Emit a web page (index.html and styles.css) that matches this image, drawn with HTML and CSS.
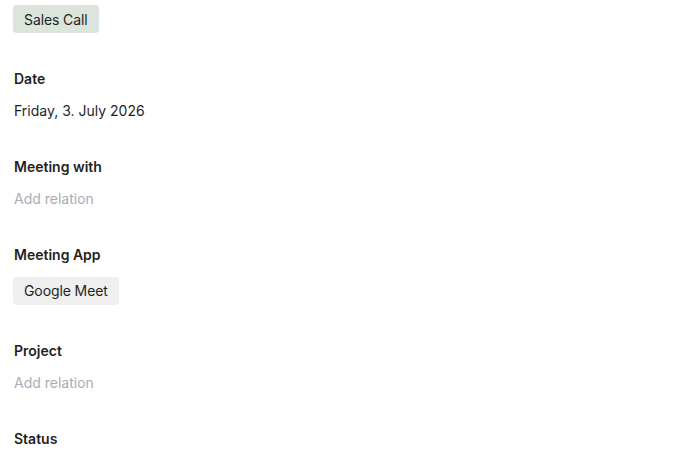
FILE: index.html
```html
<!DOCTYPE html>
<html lang="en">
<head>
<meta charset="utf-8">
<title>Sales Call</title>
<link rel="stylesheet" href="styles.css">
</head>
<body>
<div class="page">
  <div class="head">
    <span class="tag tag-green">Sales Call</span>
  </div>
  <div class="field">
    <div class="label">Date</div>
    <div class="value">Friday, 3. July 2026</div>
  </div>
  <div class="field">
    <div class="label">Meeting with</div>
    <div class="value empty">Add relation</div>
  </div>
  <div class="field">
    <div class="label">Meeting App</div>
    <div class="value"><span class="tag tag-grey">Google Meet</span></div>
  </div>
  <div class="field">
    <div class="label">Project</div>
    <div class="value empty">Add relation</div>
  </div>
  <div class="field">
    <div class="label">Status</div>
  </div>
</div>
</body>
</html>
```

FILE: styles.css
```css
html, body {
  margin: 0;
  background: #ffffff;
}

body {
  font-family: Inter, "Noto Sans", sans-serif;
  font-size: 14px;
  color: #1f1f1f;
}

.page {
  display: flex;
  flex-direction: column;
  gap: 36px;
  padding: 5px 14px 0 13px;
}

.head {
  display: flex;
}

.tag {
  display: inline-flex;
  align-items: center;
  height: 28px;
  padding: 0 11px 0 11px;
  border-radius: 4px;
  font-size: 14px;
  letter-spacing: -0.1px;
  color: #1f1f1f;
  box-sizing: border-box;
}

.tag-green {
  background: #dce5dc;
}

.tag-grey {
  background: #efefef;
}

.field {
  display: flex;
  flex-direction: column;
  gap: 12px;
  padding-left: 1px;
}

.label {
  font-weight: 600;
  line-height: 20px;
}

.value {
  line-height: 20px;
  display: flex;
}

.value .tag {
  margin-left: -1px;
}

.value.empty {
  color: #a9acb4;
}
```
